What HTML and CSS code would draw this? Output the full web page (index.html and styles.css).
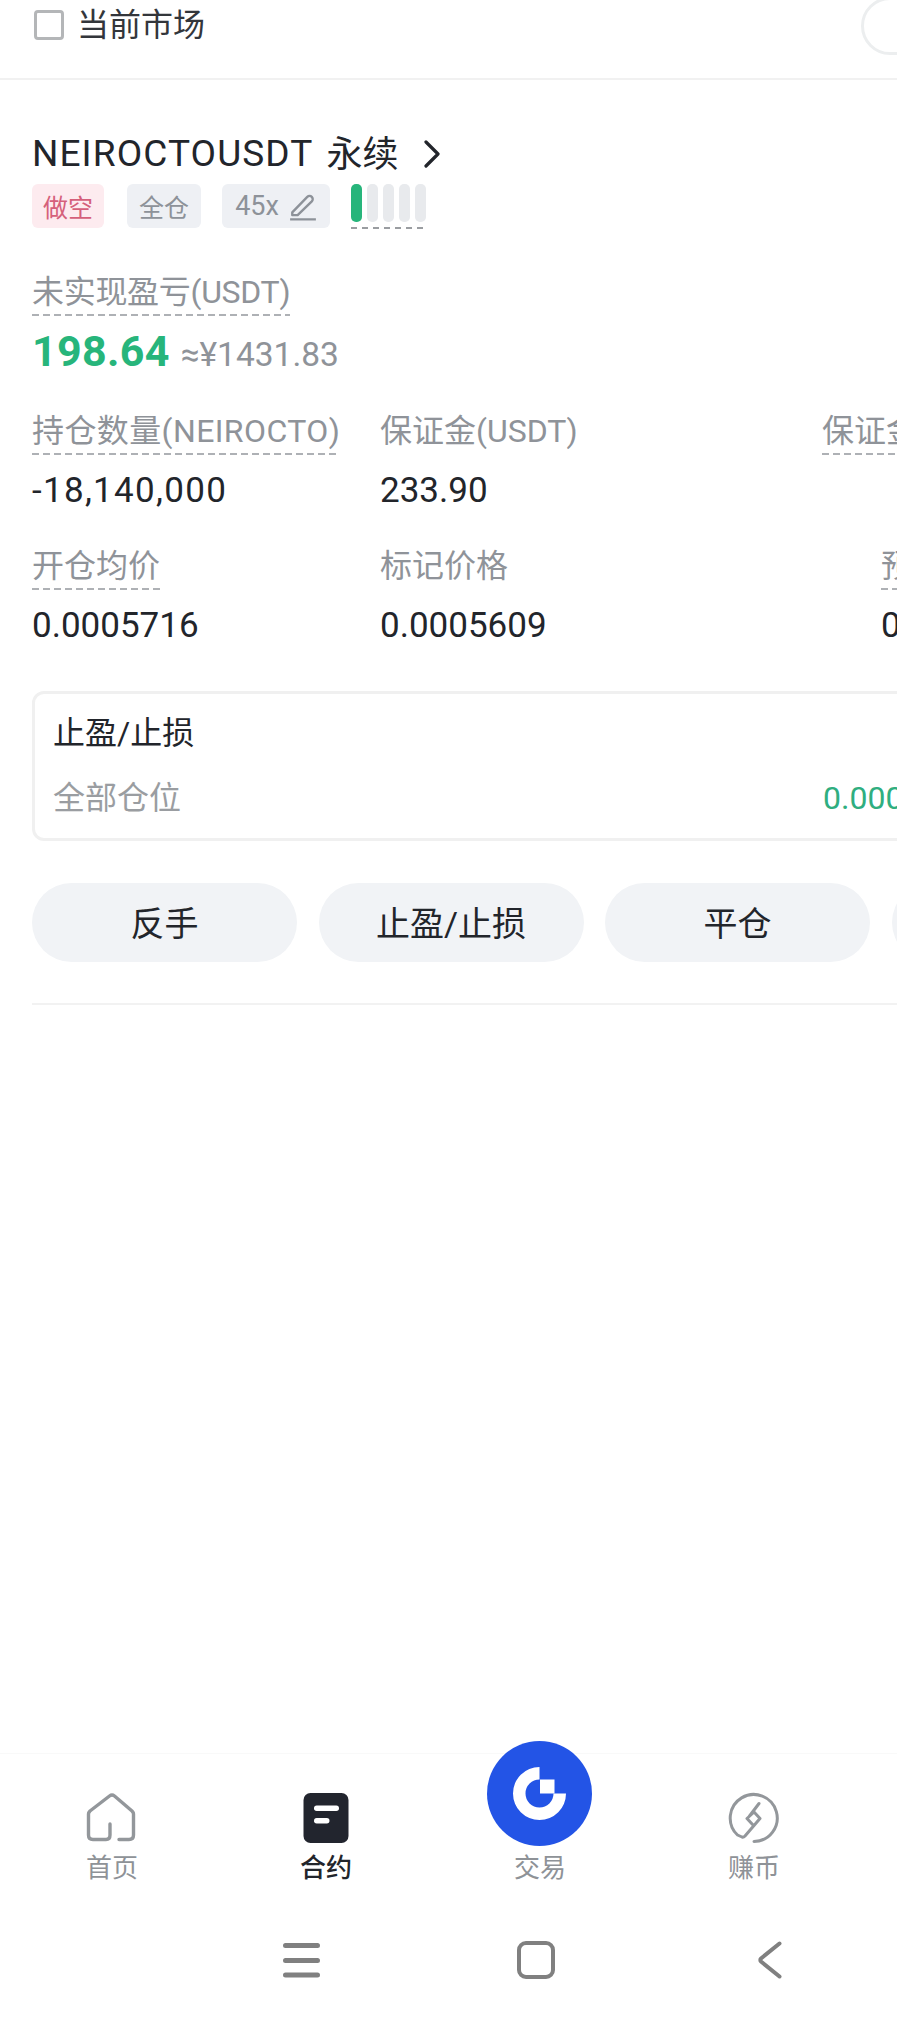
FILE: index.html
```html
<!DOCTYPE html>
<html lang="zh">
<head>
  <meta charset="UTF-8">
  <title>当前市场</title>
  <link rel="stylesheet" href="styles.css">
</head>
<body>
  <div class="filter-bar">
    <span class="checkbox"></span>
    <span class="filter-label">当前市场</span>
    <span class="toggle"></span>
  </div>

  <main class="position">
    <div class="title-row">
      <span class="symbol">NEIROCTOUSDT</span>
      <span class="contract">永续</span>
      <svg class="chevron" width="17" height="28" viewBox="0 0 17 28"><path d="M2 2l12 12L2 26" fill="none" stroke="#22252b" stroke-width="3.2" stroke-linecap="round" stroke-linejoin="round"/></svg>
    </div>

    <div class="tags">
      <span class="tag tag-short">做空</span>
      <span class="tag">全仓</span>
      <span class="tag tag-lever">45x
        <svg width="28" height="29" viewBox="0 0 26 27"><path d="M3 19L17 4.500a3 3 0 0 1 4.200 0a3 3 0 0 1 0 4.200L8 21.500H3z M1 25.500h24" fill="none" stroke="#8d9299" stroke-width="2.200" stroke-linejoin="round"/></svg>
      </span>
      <span class="risk">
        <i class="on"></i><i></i><i></i><i></i><i></i>
      </span>
    </div>

    <div class="pnl">
      <span class="label label-tight">未实现盈亏(USDT)</span>
      <div class="pnl-value"><strong>198.64</strong><span>≈¥1431.83</span></div>
    </div>

    <div class="stats stats-first">
      <div class="stat">
        <span class="label label-wide">持仓数量(NEIROCTO)</span>
        <div class="value value-wide">-18,140,000</div>
      </div>
      <div class="stat">
        <span class="label plain">保证金(USDT)</span>
        <div class="value">233.90</div>
      </div>
      <div class="stat">
        <span class="label">保证金率</span>
      </div>
    </div>

    <div class="stats stats-second">
      <div class="stat">
        <span class="label">开仓均价</span>
        <div class="value">0.0005716</div>
      </div>
      <div class="stat">
        <span class="label plain">标记价格</span>
        <div class="value">0.0005609</div>
      </div>
      <div class="stat">
        <span class="label">预估强平价</span>
        <div class="value">0.0011</div>
      </div>
    </div>

    <div class="tpsl-card">
      <div class="tpsl-title">止盈/止损</div>
      <div class="tpsl-row">
        <span class="tpsl-name">全部仓位</span>
        <span class="tpsl-price">0.0005000</span>
      </div>
    </div>

    <div class="actions">
      <button>反手</button>
      <button>止盈/止损</button>
      <button>平仓</button>
      <button></button>
    </div>

    <div class="rule"></div>
  </main>

  <footer>
    <nav class="tabs">
      <div class="tab">
        <svg class="tab-icon" width="66" height="66" viewBox="0 0 66 66"><path d="M40 54.500H50Q54.500 54.500 54.500 50V29Q54.500 27.500 53 26L35.500 11Q33 9 30.500 11L11 26Q9.500 27.500 9.500 29V50Q9.500 54.500 14 54.500H27Q31 54.500 31 50V39" fill="none" stroke="#93979b" stroke-width="3.400" stroke-linecap="round" stroke-linejoin="round"/></svg>
        <span>首页</span>
      </div>
      <div class="tab tab-active">
        <svg class="tab-icon" width="66" height="66" viewBox="0 0 66 66"><rect x="10.500" y="8" width="45" height="50" rx="7" fill="#22252e"/><rect x="21" y="20.500" width="25" height="5.500" rx="2.700" fill="#fff"/><rect x="21" y="33" width="15.500" height="5.500" rx="2.700" fill="#fff"/></svg>
        <span>合约</span>
      </div>
      <div class="tab">
        <svg class="trade-btn" width="105" height="105" viewBox="0 0 105 105"><circle cx="52.500" cy="52.500" r="52.500" fill="#2354e6"/><path d="M52.500 26A26.500 26.500 0 1 0 79 52.500H66.500A14 14 0 1 1 52.500 38.500Z" fill="#fff"/><rect x="53" y="38.500" width="14.500" height="14" fill="#fff"/></svg>
        <span>交易</span>
      </div>
      <div class="tab">
        <svg class="tab-icon" width="66" height="66" viewBox="0 0 66 66"><path d="M33 56.500A23.500 23.500 0 1 0 16.500 50L21 52Q22.500 52.500 24 51L39 33.500L33 27L26 33.500L32 40M28.500 31L38 18.500" fill="none" stroke="#93979b" stroke-width="3" stroke-linecap="round" stroke-linejoin="round"/></svg>
        <span>赚币</span>
      </div>
    </nav>
    <div class="system-nav">
      <svg class="sys-menu" width="37" height="35" viewBox="0 0 37 35"><path d="M2.500 2.500h32M2.500 17.500h32M2.500 32h32" stroke="#808080" stroke-width="5" stroke-linecap="round"/></svg>
      <svg class="sys-home" width="38" height="38" viewBox="0 0 38 38"><rect x="2" y="2" width="34" height="34" rx="7" fill="none" stroke="#808080" stroke-width="4"/></svg>
      <svg class="sys-back" width="25" height="38" viewBox="0 0 25 38"><path d="M22.500 2.500L4 17.500a2 2 0 0 0 0 3L22.500 35.500" fill="none" stroke="#808080" stroke-width="4" stroke-linecap="round"/></svg>
    </div>
  </footer>
</body>
</html>
```

FILE: styles.css
```css
* {
  box-sizing: border-box;
}

html, body {
  margin: 0;
  height: 2026px;
  overflow: hidden;
}

body {
  display: flex;
  flex-direction: column;
  background-color: #fff;
  font-family: Roboto, "Noto Sans CJK SC", sans-serif;
  color: #22252b;
}

/* top filter */
.filter-bar {
  display: flex;
  align-items: flex-start;
  flex: none;
  height: 80px;
  padding: 10px 0 0 34px;
  border-bottom: 2px solid #f1f1f1;
}

.checkbox {
  width: 30px;
  height: 30px;
  border: 3px solid #b4b6b8;
  border-radius: 4px;
}

.filter-label {
  margin-left: 13px;
  font-size: 32px;
  line-height: 30px;
  color: #33363b;
}

.toggle {
  flex: none;
  width: 100px;
  height: 58px;
  margin: -13px -64px 0 auto;
  border: 3px solid #eceeef;
  border-radius: 29px;
}

/* position */
.position {
  flex: 1;
  padding: 52px 0 0 32px;
}

.title-row {
  display: flex;
  align-items: center;
  height: 44px;
}

.symbol {
  font-size: 37px;
  letter-spacing: 1.1px;
  margin-bottom: 2px;
}

.contract {
  margin: 0 0 6px 13px;
  font-size: 36px;
}

.chevron {
  margin-left: 26px;
}

.tags {
  display: flex;
  margin-top: 8px;
}

.tag {
  display: flex;
  align-items: center;
  justify-content: center;
  width: 74px;
  height: 44px;
  margin-right: 21px;
  border-radius: 6px;
  background-color: #eef0f4;
  font-size: 25px;
  color: #8d9299;
}

.tag-short {
  width: 72px;
  margin-right: 23px;
  background-color: #fdebef;
  color: #d5607b;
}

.tag-lever {
  width: 108px;
  font-size: 27px;
}

.tag-lever svg {
  margin-left: 10px;
}

.risk {
  display: flex;
  gap: 5px;
  height: 45px;
  padding-bottom: 7px;
  background: repeating-linear-gradient(90deg, #9a9da1 0 6px, transparent 6px 11px) left bottom / 100% 2px no-repeat;
}

.risk i {
  width: 11px;
  border-radius: 5px;
  background-color: #e8eaed;
}

.risk .on {
  background-color: #27b57b;
}

.label {
  display: inline-block;
  height: 41px;
  font-size: 32px;
  line-height: 35px;
  color: #8f9399;
  background: repeating-linear-gradient(90deg, #aeb1b5 0 7px, transparent 7px 11px) left bottom / 100% 2px no-repeat;
}

.label.plain {
  background: none;
}

.label-wide {
  letter-spacing: 0.4px;
}

.label-tight {
  letter-spacing: -0.3px;
}

.pnl {
  margin-top: 46px;
}

.pnl-value {
  display: flex;
  align-items: baseline;
  height: 50px;
  margin-top: 10px;
  line-height: 50px;
}

.pnl-value strong {
  font-size: 43px;
  letter-spacing: 0.3px;
  color: #27b57b;
}

.pnl-value span {
  margin-left: 11px;
  font-size: 33.500px;
  color: #8f9399;
}

.stats {
  display: grid;
  grid-template-columns: 348px 442px 300px;
  width: 1100px;
}

.stats-first {
  margin-top: 38px;
}

.stats-second {
  grid-template-columns: 348px 501px 300px;
  margin-top: 37px;
}

.stat {
  height: 98px;
}

.value {
  height: 40px;
  margin-top: 16px;
  font-size: 35px;
  line-height: 40px;
}

.value-wide {
  letter-spacing: 1.300px;
}

/* TP/SL card */
.tpsl-card {
  width: 1000px;
  height: 150px;
  margin-top: 44px;
  padding: 21px 0 0 18px;
  border: 3px solid #f0f0f0;
  border-radius: 12px;
}

.tpsl-title {
  font-size: 32px;
  line-height: 36px;
}

.tpsl-row {
  display: flex;
  margin-top: 29px;
  font-size: 32px;
  line-height: 36px;
}

.tpsl-name {
  flex: none;
  width: 770px;
  color: #9a9da1;
}

.tpsl-price {
  color: #2fae80;
}

/* action buttons */
.actions {
  display: flex;
  gap: 21.500px;
  width: 1200px;
  margin-top: 42px;
}

.actions button {
  flex: none;
  width: 265px;
  height: 79px;
  padding: 0 0 3px;
  border: none;
  border-radius: 40px;
  background-color: #f1f3f6;
  font-family: inherit;
  font-size: 34px;
  color: #22252b;
}

.rule {
  height: 2px;
  margin-top: 41px;
  background-color: #f2f2f2;
}

/* bottom */
footer {
  flex: none;
}

.tabs {
  display: grid;
  grid-template-columns: repeat(4, 214px);
  padding: 31px 0 0 5px;
  border-top: 1px solid #f9f9f9;
}

.tab {
  display: flex;
  flex-direction: column;
  align-items: center;
  font-size: 26px;
  line-height: 34px;
  color: #8e9297;
}

.tab-active {
  font-weight: 500;
  color: #22252b;
}

.tab-icon {
  display: block;
}

.trade-btn {
  display: block;
  margin: -44px 2px 5px 0;
}

.system-nav {
  display: flex;
  align-items: center;
  height: 141px;
  padding: 9px 0 0 283px;
}

.sys-home {
  margin-left: 197px;
}

.sys-back {
  margin-left: 202px;
}
```
